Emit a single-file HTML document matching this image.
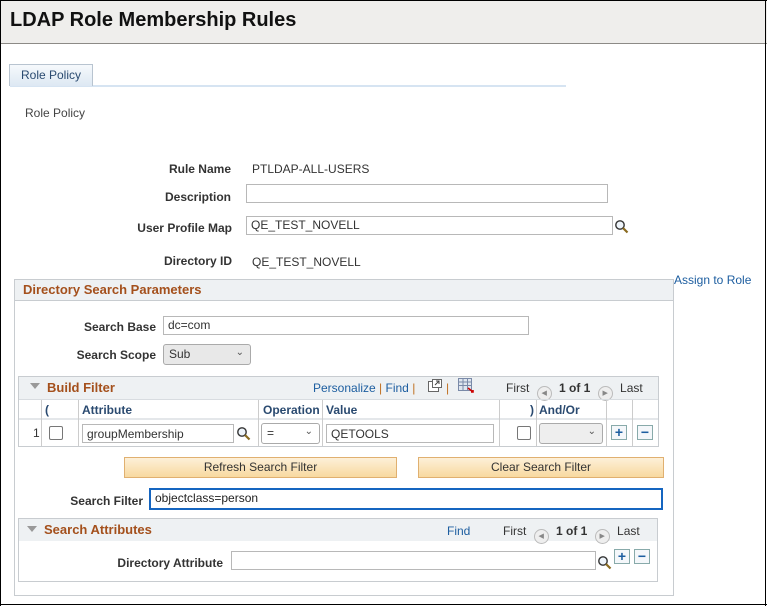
<!DOCTYPE html>
<html><head><meta charset="utf-8"><style>
*{box-sizing:border-box;margin:0;padding:0}
body{width:767px;height:606px;position:relative;overflow:hidden;background:#fff;font-family:"Liberation Sans",Arial,sans-serif;font-size:12px;color:#333}
.a{position:absolute;white-space:nowrap}
.lbl{position:absolute;font-weight:bold;color:#333;text-align:right;white-space:nowrap}
.inp{position:absolute;border:1px solid #b8b8b8;background:#fff;height:19px;padding:1px 4px;font-size:12px;color:#333}
.lens{position:absolute;width:15px;height:15px}
.link{color:#1d5ea0}
.pm{position:absolute;width:16px;height:15px;border:1px solid #8aa;background:#f4f7fa;color:#1d5ea0;font-weight:bold;font-size:14px;line-height:12px;text-align:center}
.btn{position:absolute;height:21px;border:1px solid #e0b070;background:linear-gradient(#fdf0d8,#f8d9a0);text-align:center;line-height:19px;color:#333;font-size:12px}
.vl{position:absolute;width:1px;background:#ccc}
.circ{display:inline-block;width:15px;height:15px;border-radius:50%;border:1px solid #bbb;background:#eee;vertical-align:-3px;font-size:7px;line-height:13px;text-align:center;color:#888}
</style></head><body>
<div class="a" style="left:0;top:0;width:767px;height:44px;background:#efeeec;border-bottom:1px solid #8c8a86"></div>
<div class="a" style="left:0;top:0;width:767px;height:1px;background:#000"></div>
<div class="a" style="left:0;top:0;width:1px;height:606px;background:#000"></div>
<div class="a" style="left:765px;top:0;width:1px;height:606px;background:#000"></div>
<div class="a" style="left:0;top:604px;width:767px;height:1px;background:#000"></div>
<div class="a" style="left:10px;top:9px;font-size:20px;font-weight:bold;color:#111">LDAP Role Membership Rules</div>

<div class="a" style="left:10px;top:85px;width:556px;height:2px;background:#d6e4f2"></div>
<div class="a" style="left:9px;top:64px;width:84px;height:22px;border:1px solid #b8c4d0;border-bottom:none;background:linear-gradient(#f6f9fc,#dde8f3);color:#2a4a70;text-align:center;line-height:20px">Role Policy</div>
<div class="a" style="left:25px;top:106px;color:#444">Role Policy</div>

<div class="lbl" style="right:536px;top:162px">Rule Name</div>
<div class="a" style="left:252px;top:162px">PTLDAP-ALL-USERS</div>
<div class="lbl" style="right:536px;top:190px">Description</div>
<div class="inp" style="left:246px;top:184px;width:362px"></div>
<div class="lbl" style="right:535px;top:221px">User Profile Map</div>
<div class="inp" style="left:246px;top:216px;width:367px">QE_TEST_NOVELL</div>
<svg class="lens" style="left:614px;top:219px" viewBox="0 0 15 15"><circle cx="6" cy="6" r="4.2" fill="#eef4fa" stroke="#333" stroke-width="1.4"/><path d="M9 9l4.5 4.5" stroke="#8a6a20" stroke-width="2.2"/></svg>
<div class="lbl" style="right:535px;top:254px">Directory ID</div>
<div class="a" style="left:252px;top:255px">QE_TEST_NOVELL</div>
<div class="a link" style="left:674px;top:273px">Assign to Role</div>

<div class="a" style="left:14px;top:279px;width:660px;height:317px;border:1px solid #c8ccd0"></div>
<div class="a" style="left:15px;top:280px;width:658px;height:21px;background:#eef1f3;border-bottom:1px solid #c8ccd0"></div>
<div class="a" style="left:23px;top:282px;font-size:13px;font-weight:bold;color:#a4501c">Directory Search Parameters</div>

<div class="lbl" style="right:611px;top:320px">Search Base</div>
<div class="inp" style="left:163px;top:316px;width:366px">dc=com</div>
<div class="lbl" style="right:611px;top:348px">Search Scope</div>
<div class="a" style="left:163px;top:344px;width:88px;height:21px;border:1px solid #aaa;border-radius:3px;background:#e8e8e8;padding:2px 5px">Sub<span style="position:absolute;right:6px;top:2px;font-size:10px;color:#555">&#8964;</span></div>

<div class="a" style="left:18px;top:376px;width:641px;height:71px;border:1px solid #c8ccd0"></div>
<div class="a" style="left:19px;top:377px;width:639px;height:22px;background:#eef1f3"></div>
<div class="a" style="left:30px;top:383px;width:0;height:0;border-left:5px solid transparent;border-right:5px solid transparent;border-top:6px solid #999"></div>
<div class="a" style="left:47px;top:380px;font-size:13px;font-weight:bold;color:#a4501c">Build Filter</div>
<div class="a link" style="left:313px;top:381px">Personalize <span style="color:#c07020">|</span> Find <span style="color:#c07020">|</span></div>
<svg class="a" style="left:428px;top:379px" width="14" height="13" viewBox="0 0 14 13"><rect x="0.5" y="2.5" width="10" height="10" fill="#fff" stroke="#666"/><rect x="4.5" y="0.5" width="9" height="8" fill="#fff" stroke="#666"/><path d="M7 6l4-4M8 2h3v3" stroke="#444" fill="none"/></svg>
<div class="a" style="left:446px;top:381px;color:#c07020">|</div>
<svg class="a" style="left:458px;top:378px" width="16" height="15" viewBox="0 0 16 15"><rect x="0.5" y="0.5" width="13" height="12" fill="#dfe6ef" stroke="#7a8aa8"/><path d="M0.5 4h13M0.5 7.5h13M5 0.5v12M9.5 0.5v12" stroke="#7a8aa8"/><path d="M10 10l5 4M13 14h2v-2" stroke="#c00" stroke-width="1.6" fill="none"/></svg>
<div class="a" style="left:506px;top:381px;color:#333">First <span class="circ" style="margin:0 4px">&#9664;</span> <b>1 of 1</b> <span class="circ" style="margin:0 4px">&#9654;</span> Last</div>

<div class="a" style="left:19px;top:399px;width:639px;height:1px;background:#d8dce0"></div>
<div class="a" style="left:19px;top:418px;width:639px;height:2px;background:#e4e7ea"></div>
<div class="vl" style="left:41px;top:400px;height:46px"></div>
<div class="vl" style="left:78px;top:400px;height:46px"></div>
<div class="vl" style="left:258px;top:400px;height:46px"></div>
<div class="vl" style="left:322px;top:400px;height:46px"></div>
<div class="vl" style="left:499px;top:400px;height:46px"></div>
<div class="vl" style="left:536px;top:400px;height:46px"></div>
<div class="vl" style="left:606px;top:400px;height:46px"></div>
<div class="vl" style="left:632px;top:400px;height:46px"></div>
<div class="a" style="left:45px;top:403px;font-weight:bold;color:#2a4a70">(</div>
<div class="a" style="left:82px;top:403px;font-weight:bold;color:#2a4a70">Attribute</div>
<div class="a" style="left:263px;top:403px;font-weight:bold;color:#2a4a70">Operation</div>
<div class="a" style="left:326px;top:403px;font-weight:bold;color:#2a4a70">Value</div>
<div class="a" style="left:530px;top:403px;font-weight:bold;color:#2a4a70">)</div>
<div class="a" style="left:539px;top:403px;font-weight:bold;color:#2a4a70">And/Or</div>

<div class="a" style="left:33px;top:426px">1</div>
<div class="a" style="left:49px;top:426px;width:14px;height:14px;border:1px solid #777;border-radius:2px;background:#fff"></div>
<div class="inp" style="left:82px;top:424px;width:152px;padding-top:2px">groupMembership</div>
<svg class="lens" style="left:236px;top:426px" viewBox="0 0 15 15"><circle cx="6" cy="6" r="4.2" fill="#eef4fa" stroke="#333" stroke-width="1.4"/><path d="M9 9l4.5 4.5" stroke="#8a6a20" stroke-width="2.2"/></svg>
<div class="a" style="left:261px;top:423px;width:59px;height:21px;border:1px solid #aaa;border-radius:3px;background:#fff;padding:2px 5px">=<span style="position:absolute;right:6px;top:2px;font-size:10px;color:#555">&#8964;</span></div>
<div class="inp" style="left:326px;top:424px;width:168px;padding-top:2px">QETOOLS</div>
<div class="a" style="left:517px;top:426px;width:14px;height:14px;border:1px solid #777;border-radius:2px;background:#fff"></div>
<div class="a" style="left:539px;top:423px;width:64px;height:21px;border:1px solid #aaa;border-radius:3px;background:#eee"><span style="position:absolute;right:6px;top:2px;font-size:10px;color:#555">&#8964;</span></div>
<div class="pm" style="left:611px;top:425px">+</div>
<div class="pm" style="left:637px;top:425px">&minus;</div>

<div class="btn" style="left:124px;top:457px;width:273px">Refresh Search Filter</div>
<div class="btn" style="left:418px;top:457px;width:246px">Clear Search Filter</div>

<div class="lbl" style="right:624px;top:494px">Search Filter</div>
<div class="a" style="left:149px;top:488px;width:514px;height:22px;border:2px solid #1565c0;padding:1px 4px;color:#222">objectclass=person</div>

<div class="a" style="left:18px;top:518px;width:640px;height:64px;border:1px solid #c8ccd0"></div>
<div class="a" style="left:19px;top:519px;width:638px;height:22px;background:#eef1f3"></div>
<div class="a" style="left:27px;top:526px;width:0;height:0;border-left:5px solid transparent;border-right:5px solid transparent;border-top:6px solid #999"></div>
<div class="a" style="left:44px;top:522px;font-size:13px;font-weight:bold;color:#a4501c">Search Attributes</div>
<div class="a link" style="left:447px;top:524px">Find</div>
<div class="a" style="left:503px;top:524px">First <span class="circ" style="margin:0 4px">&#9664;</span> <b>1 of 1</b> <span class="circ" style="margin:0 4px">&#9654;</span> Last</div>
<div class="lbl" style="right:544px;top:556px">Directory Attribute</div>
<div class="inp" style="left:231px;top:551px;width:365px"></div>
<svg class="lens" style="left:597px;top:555px" viewBox="0 0 15 15"><circle cx="6" cy="6" r="4.2" fill="#eef4fa" stroke="#333" stroke-width="1.4"/><path d="M9 9l4.5 4.5" stroke="#8a6a20" stroke-width="2.2"/></svg>
<div class="pm" style="left:614px;top:549px">+</div>
<div class="pm" style="left:634px;top:549px">&minus;</div>
</body></html>
